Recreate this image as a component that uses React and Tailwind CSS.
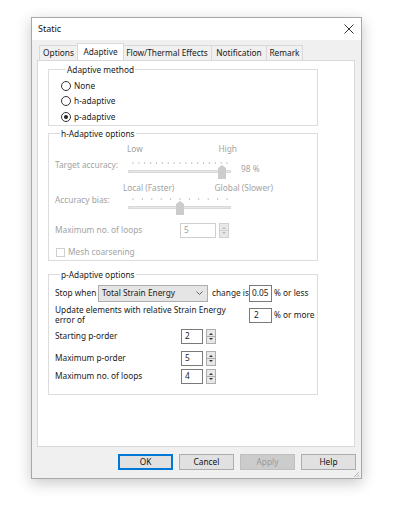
import React from 'react';

const F = { fontFamily: '"Noto Sans", "Open Sans", sans-serif' };

function Radio({ checked, label }) {
  return (
    <div className="flex items-center h-[15.5px]">
      <span className="w-[10px] h-[10px] rounded-full border border-[#333] bg-white flex items-center justify-center">
        {checked && <span className="w-[4px] h-[4px] rounded-full bg-[#222]" />}
      </span>
      <span className="ml-[3px] text-[#1a1a1a]">{label}</span>
    </div>
  );
}

function Spinner({ disabled }) {
  const c = disabled ? '#b8b8b8' : '#333';
  return (
    <div className={`ml-[3px] w-[10px] h-[15px] border ${disabled ? 'border-[#d0d0d0]' : 'border-[#adadad]'} bg-[#e8e8e8] flex flex-col`}>
      <svg width="8" height="13" viewBox="0 0 8 13">
        <path d="M2 5 L4 3 L6 5 Z" fill={c} />
        <line x1="0" y1="6.5" x2="8" y2="6.5" stroke={disabled ? '#d0d0d0' : '#adadad'} />
        <path d="M2 8 L6 8 L4 10 Z" fill={c} />
      </svg>
    </div>
  );
}

function NumBox({ value, w = 'w-[22px]', disabled }) {
  return (
    <div className={`${w} h-[15px] border ${disabled ? 'border-[#cfcfcf] text-[#a0a0a0]' : 'border-[#7a7a7a] text-[#1a1a1a]'} bg-white flex items-center pl-[3px]`}>
      {value}
    </div>
  );
}

function Slider({ ticks, thumbX }) {
  const xs = Array.from({ length: ticks }, (_, i) => 5 + (i * 94) / (ticks - 1));
  return (
    <svg width="104" height="20" viewBox="0 0 104 20">
      {xs.map((x, i) => (
        <line key={i} x1={x} y1="2" x2={x} y2="4" stroke="#c4c4c4" strokeWidth="1" />
      ))}
      <rect x="0.5" y="10.5" width="102" height="2" fill="#e7e7e7" stroke="#d9d9d9" />
      <path d={`M${thumbX} 8 L${thumbX + 4} 5 L${thumbX + 8} 8 L${thumbX + 8} 19 L${thumbX} 19 Z`} fill="#cccccc" />
    </svg>
  );
}

export default function App() {
  return (
    <div className="w-[400px] h-[506px] bg-white text-[8.3px] leading-none pt-[17px] pl-[31px]" style={F}>
      <div className="w-[331px] h-[462px] border border-[#a8a8a8] bg-[#f0f0f0] shadow-[0_4px_14px_rgba(0,0,0,0.22)] flex flex-col">
        {/* title bar */}
        <div className="h-[22px] bg-white flex items-center justify-between pl-[6px] pr-[7px]">
          <span className="text-[9px] text-[#111]">Static</span>
          <svg width="10" height="10" viewBox="0 0 10 10">
            <path d="M0.5 0.5 L9.5 9.5 M9.5 0.5 L0.5 9.5" stroke="#333" strokeWidth="1" />
          </svg>
        </div>

        {/* tabs */}
        <div className="mt-[3px] h-[17px] flex items-end pl-[7px]">
          <div className="h-[15px] w-[39px] border border-b-0 border-[#d9d9d9] flex items-center justify-center text-[#1a1a1a]">Options</div>
          <div className="h-[17px] w-[47px] -mx-[1px] bg-white border border-b-0 border-[#d9d9d9] flex items-center justify-center text-[#1a1a1a] relative z-10">Adaptive</div>
          <div className="h-[15px] w-[89px] border border-b-0 border-l-0 border-[#d9d9d9] flex items-center justify-center text-[#1a1a1a]">Flow/Thermal Effects</div>
          <div className="h-[15px] w-[55px] border border-b-0 border-l-0 border-[#d9d9d9] flex items-center justify-center text-[#1a1a1a]">Notification</div>
          <div className="h-[15px] w-[36px] border border-b-0 border-l-0 border-[#d9d9d9] flex items-center justify-center text-[#1a1a1a]">Remark</div>
        </div>

        {/* panel */}
        <div className="ml-[5px] w-[318px] h-[390px] bg-white border border-[#d9d9d9] pl-[10px] pt-[5px] flex flex-col">
          {/* Adaptive method */}
          <fieldset className="w-[270px] h-[60px] border border-[#dcdcdc] pl-[12px]">
            <legend className="ml-[5px] px-[1px] text-[#1a1a1a]">Adaptive method</legend>
            <div className="mt-[4px] flex flex-col">
              <Radio label="None" />
              <Radio label="h-adaptive" />
              <Radio checked label="p-adaptive" />
            </div>
          </fieldset>

          {/* h-Adaptive */}
          <fieldset className="mt-[4px] w-[270px] h-[131px] border border-[#dcdcdc] pl-[6px] text-[#a3a3a3]">
            <legend className="ml-[5px] px-[1px] text-[#1a1a1a]">h-Adaptive options</legend>
            <div className="mt-[5px] h-[12px] flex items-center">
              <div className="w-[72px]" />
              <div className="w-[110px] flex justify-between">
                <span>Low</span>
                <span>High</span>
              </div>
            </div>
            <div className="mt-[4.5px] h-[20px] flex items-start">
              <span className="w-[73px] mt-[1px]">Target accuracy:</span>
              <Slider ticks={17} thumbX={90} />
              <span className="ml-[9px] mt-[5px]">98 %</span>
            </div>
            <div className="mt-[2.5px] h-[12px] flex items-center">
              <div className="w-[68px]" />
              <div className="w-[150px] flex justify-between">
                <span>Local (Faster)</span>
                <span>Global (Slower)</span>
              </div>
            </div>
            <div className="mt-[1.5px] h-[20px] flex items-start">
              <span className="w-[73px] mt-[0px]">Accuracy bias:</span>
              <Slider ticks={11} thumbX={48} />
            </div>
            <div className="mt-[7.5px] flex items-center h-[15px]">
              <span className="w-[125px]">Maximum no. of loops</span>
              <NumBox value="5" w="w-[36px]" disabled />
              <Spinner disabled />
            </div>
            <div className="mt-[8px] flex items-center h-[12px]">
              <span className="ml-[1px] w-[9px] h-[9px] border border-[#cfcfcf] bg-white" />
              <span className="ml-[3px]">Mesh coarsening</span>
            </div>
          </fieldset>

          {/* p-Adaptive */}
          <fieldset className="mt-[10px] w-[270px] h-[124px] border border-[#dcdcdc] pl-[6px] text-[#1a1a1a]">
            <legend className="ml-[5px] px-[1px]">p-Adaptive options</legend>
            <div className="mt-[5.5px] h-[17px] flex items-center">
              <span className="w-[43px]">Stop when</span>
              <div className="w-[110px] h-[17px] border border-[#adadad] bg-[#e5e5e5] flex items-center justify-between pl-[3px] pr-[4px]">
                <span>Total Strain Energy</span>
                <svg width="7" height="4" viewBox="0 0 7 4">
                  <path d="M0.5 0.5 L3.5 3.5 L6.5 0.5" stroke="#555" fill="none" strokeWidth="0.9" />
                </svg>
              </div>
              <span className="ml-[4px] w-[37px]">change is</span>
              <div className="w-[23px] h-[17px] border border-[#7a7a7a] bg-white flex items-center pl-[2px]">0.05</div>
              <span className="ml-[2px]">% or less</span>
            </div>
            <div className="mt-[3.5px] flex items-center">
              <div className="w-[194px] flex flex-col leading-[10px]">
                <span>Update elements with relative Strain Energy</span>
                <span>error of</span>
              </div>
              <div className="w-[23px] h-[15px] border border-[#7a7a7a] bg-white flex items-center pl-[4px]">2</div>
              <span className="ml-[2px]">% or more</span>
            </div>
            <div className="mt-[4px] flex items-center h-[15px]">
              <span className="w-[126px]">Starting p-order</span>
              <NumBox value="2" />
              <Spinner />
            </div>
            <div className="mt-[7px] flex items-center h-[15px]">
              <span className="w-[126px]">Maximum p-order</span>
              <NumBox value="5" />
              <Spinner />
            </div>
            <div className="mt-[3px] flex items-center h-[15px]">
              <span className="w-[126px]">Maximum no. of loops</span>
              <NumBox value="4" />
              <Spinner />
            </div>
          </fieldset>
        </div>

        {/* buttons */}
        <div className="mt-[7px] flex justify-end gap-[6px] pr-[5px]">
          <button className="w-[55px] h-[16px] border border-[#0078d7] bg-[#e1e1e1] text-[#111] shadow-[inset_0_0_0_1px_#0078d7]" style={F}>OK</button>
          <button className="w-[55px] h-[16px] border border-[#adadad] bg-[#e1e1e1] text-[#111]" style={F}>Cancel</button>
          <button className="w-[55px] h-[16px] border border-[#bfbfbf] bg-[#cccccc] text-[#9a9a9a]" style={F}>Apply</button>
          <button className="w-[55px] h-[16px] border border-[#adadad] bg-[#e1e1e1] text-[#111]" style={F}>Help</button>
        </div>
        <div className="flex justify-end pr-[1px]">
          <svg width="8" height="8" viewBox="0 0 8 8">
            <path d="M7 2 L2 7 M7 4.5 L4.5 7 M7 6.5 L6.5 7" stroke="#a8a8a8" strokeWidth="0.8" />
          </svg>
        </div>
      </div>
    </div>
  );
}
